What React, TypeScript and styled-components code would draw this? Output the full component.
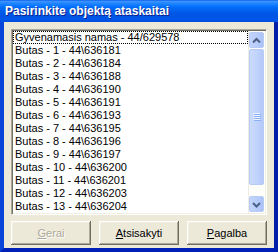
import styled, { createGlobalStyle } from 'styled-components';

const items = [
  'Gyvenamasis namas - 44/629578',
  'Butas - 1 - 44\\636181',
  'Butas - 2 - 44\\636184',
  'Butas - 3 - 44\\636188',
  'Butas - 4 - 44\\636190',
  'Butas - 5 - 44\\636191',
  'Butas - 6 - 44\\636193',
  'Butas - 7 - 44\\636195',
  'Butas - 8 - 44\\636196',
  'Butas - 9 - 44\\636197',
  'Butas - 10 - 44\\636200',
  'Butas - 11 - 44\\636201',
  'Butas - 12 - 44\\636203',
  'Butas - 13 - 44\\636204',
];

function Chevron({ down }: { down?: boolean }) {
  return (
    <svg width='9' height='7' viewBox='0 0 9 7'>
      <path
        d={down ? 'M1 2 L4.5 5.5 L8 2' : 'M1 5.5 L4.5 2 L8 5.5'}
        fill='none'
        stroke='#4D6185'
        strokeWidth='2'
      />
    </svg>
  );
}

function Grip() {
  return (
    <svg width='8' height='8' viewBox='0 0 8 8'>
      <path d='M0 0.5h7M0 2.5h7M0 4.5h7M0 6.5h7' stroke='#EEF4FE' />
      <path d='M1 1.5h7M1 3.5h7M1 5.5h7M1 7.5h7' stroke='#8CB0F8' />
    </svg>
  );
}

function App() {
  return (
    <>
      <GlobalStyle />
      <Window>
        <TitleBar>Pasirinkite objektą ataskaitai</TitleBar>
        <Frame>
          <Client>
            <ListBox>
              <Items>
                {items.map((text, i) => (
                  <Item key={text} focused={i === 0}>
                    {text}
                  </Item>
                ))}
              </Items>
              <ScrollBar>
                <ScrollButton>
                  <Chevron />
                </ScrollButton>
                <Thumb>
                  <Grip />
                </Thumb>
                <Track />
                <ScrollButton>
                  <Chevron down />
                </ScrollButton>
              </ScrollBar>
            </ListBox>
            <ButtonRow>
              <Button disabled>
                <Key>G</Key>erai
              </Button>
              <Button>
                <Key>A</Key>tsisakyti
              </Button>
              <Button>
                <Key>P</Key>agalba
              </Button>
            </ButtonRow>
          </Client>
        </Frame>
      </Window>
    </>
  );
}

export default App;

const GlobalStyle = createGlobalStyle`
  body {
    margin: 0;
    overflow: hidden;
    background: #fff;
  }
`;

const Window = styled.div`
  width: 278px;
  height: 252px;
  display: flex;
  flex-direction: column;
  box-sizing: border-box;
`;

const TitleBar = styled.div`
  height: 22px;
  flex: none;
  box-sizing: border-box;
  padding: 4px 0 0 5px;
  background: linear-gradient(
    to bottom,
    #0a5ae8 0%,
    #3d95ff 6%,
    #2a8aff 12%,
    #127dff 22%,
    #036ffc 32%,
    #0262ee 45%,
    #0057e5 60%,
    #0054e3 75%,
    #0055eb 88%,
    #004fd8 100%
  );
  color: #fff;
  font: bold 12px 'Liberation Sans', Arial, sans-serif;
  line-height: 15px;
  text-shadow: 1px 1px #0f1f8a;
  white-space: nowrap;
`;

const Frame = styled.div`
  flex: 1;
  display: flex;
  border-left: 4px solid #0845d8;
  border-right: 4px solid #001ea8;
  border-bottom: 4px solid #0020b8;
  box-shadow: inset 1px 0 #166aee;
`;

const Client = styled.div`
  flex: 1;
  display: flex;
  flex-direction: column;
  gap: 6px;
  padding: 7px 7px 3px 7px;
  background: #ece9d8;
`;

const ListBox = styled.div`
  height: 186px;
  box-sizing: border-box;
  display: flex;
  background: #fff;
  border: 1px solid;
  border-color: #aca899 #fff #fff #aca899;
  box-shadow: inset 1px 1px #716f64, inset -1px -1px #f1efe2;
  padding: 1px;
`;

const Items = styled.div`
  flex: 1;
  overflow: hidden;
`;

const Item = styled.div<{ focused?: boolean }>`
  height: 13px;
  box-sizing: border-box;
  padding-left: 1px;
  border: 1px ${(p) => (p.focused ? 'dotted #000' : 'solid transparent')};
  font: 11px 'Liberation Sans', Arial, sans-serif;
  line-height: 11px;
  color: #000;
  white-space: nowrap;
`;

const ScrollBar = styled.div`
  width: 17px;
  flex: none;
  box-sizing: border-box;
  padding: 1px;
  display: flex;
  flex-direction: column;
  background: #fdfdfa;
  box-shadow: inset 1px 0 #eeede5;
`;

const ScrollButton = styled.div`
  height: 16px;
  flex: none;
  box-sizing: border-box;
  display: flex;
  align-items: center;
  justify-content: center;
  border: 1px solid #b7cbf5;
  border-radius: 2px;
  background: linear-gradient(to right, #c4d5fc, #b6cbfa 60%, #a9c1f7);
`;

const Thumb = styled(ScrollButton)`
  height: 136px;
  margin-top: 1px;
  background: linear-gradient(to right, #cbdbfd, #bfd2fc 60%, #b4c9f9);
`;

const Track = styled.div`
  flex: 1;
`;

const ButtonRow = styled.div`
  display: flex;
  gap: 8px;
`;

const Button = styled.button`
  flex: 1;
  height: 24px;
  padding: 0;
  border: none;
  background: #ece9d8;
  box-shadow: inset -1px -1px #716f64, inset 1px 1px #fff,
    inset -2px -2px #aca899, inset 2px 2px #f1efe2;
  font: 11px 'Liberation Sans', Arial, sans-serif;
  color: #000;

  &:disabled {
    color: #aca899;
    text-shadow: 1px 1px #fff;
  }
`;

const Key = styled.span`
  text-decoration: underline;
`;
